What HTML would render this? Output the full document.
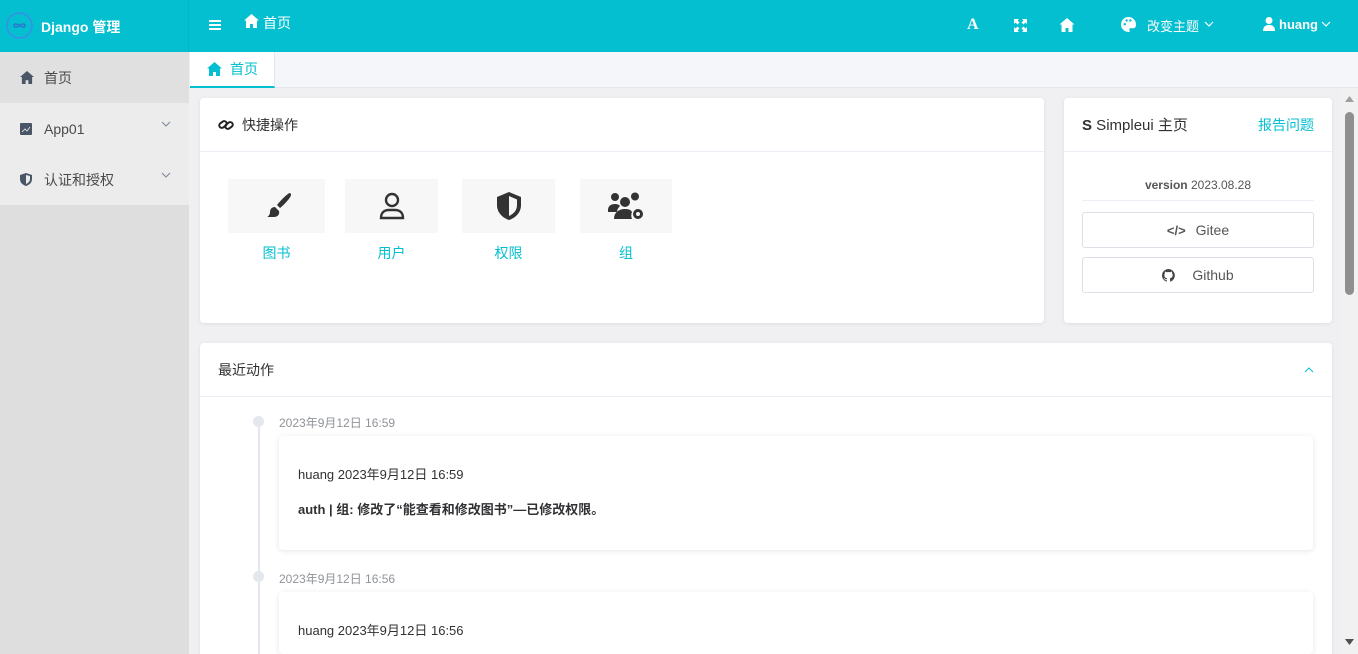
<!DOCTYPE html>
<html style="width:1358px;height:654px;overflow:hidden"><head><meta charset="utf-8"><style>
*{box-sizing:border-box;margin:0;padding:0}
html,body{overflow:hidden}
body{width:1358px;height:654px;overflow:hidden;font-family:"Liberation Sans","Noto Sans CJK SC",sans-serif;font-size:14px;color:#303133;background:#f0f0f3;position:relative}
.top{position:absolute;left:0;top:0;width:1358px;height:52px;background:#03bfcf;color:#fff}
.logo{position:absolute;left:0;top:0;width:189px;height:52px;border-right:1px solid #07b4c3}
.side{position:absolute;left:0;top:52px;width:189px;height:602px;background:#dedede}
.item{height:51px;display:flex;align-items:center;padding-left:20px;color:#4a4a4a;font-size:14px;background:#ececec;position:relative}
.item.act{background:#e0e0e0}
.item .ic{width:14px;margin-right:10px;display:flex}
.chev{position:absolute;right:18px;top:18px}
.tabs{position:absolute;left:190px;top:52px;width:1168px;height:36px;background:#f5f6f9;border-bottom:1px solid #e4e7ed}
.tab{position:absolute;left:0;top:0;width:85px;height:36px;background:#fff;border-right:1px solid #e4e7ed;border-bottom:2px solid #03bfcf;color:#03bfcf;display:flex;align-items:center;padding-left:17px;font-size:14px}
.card{position:absolute;background:#fff;border-radius:4px;box-shadow:0 1px 4px rgba(0,0,0,.08);overflow:hidden}
.hd{height:54px;border-bottom:1px solid #ebeef5;display:flex;align-items:center;padding-left:18px;font-size:14px}
.qa{position:absolute;text-align:center;color:#03bfcf;font-size:14px}
.qa .b{height:54px;background:#f7f7f7;display:flex;align-items:center;justify-content:center;margin-bottom:10px}
.btn{position:absolute;left:18px;width:232px;height:36px;border:1px solid #dcdfe6;border-radius:3px;display:flex;align-items:center;justify-content:center;color:#555;font-size:14px}
.ts{position:absolute;left:79px;color:#909399;font-size:12px}
.dot{position:absolute;left:53px;width:11px;height:11px;border-radius:50%;background:#e4e7ed}
.ent{position:absolute;left:79px;width:1034px;background:#fff;border-radius:4px;box-shadow:0 1px 6px rgba(0,0,0,.1);padding:28px 19px;font-size:13px;overflow:hidden}
</style></head><body>
<div class="top">
 <div class="logo">
  <svg style="position:absolute;left:6px;top:12px" width="27" height="27" viewBox="0 0 27 27"><circle cx="13.5" cy="13.5" r="12.5" fill="none" stroke="#3a8ee6" stroke-width="1.5"/><path d="M8 13.5c0-2 3-2 5.5 0s5.5 2 5.5 0-3-2-5.5 0-5.5 2-5.5 0z" fill="none" stroke="#2a7ad0" stroke-width="1.6"/></svg>
  <span style="position:absolute;left:41px;top:17px;font-weight:bold;font-size:14px">Django 管理</span>
 </div>
 <svg style="position:absolute;left:209px;top:19px" width="12" height="12" viewBox="0 0 12 12" fill="#fff"><rect y="1" width="12" height="2"/><rect y="5" width="12" height="2"/><rect y="9" width="12" height="2"/></svg>
 <svg style="position:absolute;left:244px;top:14px" width="15" height="14" viewBox="0 0 15 14" fill="#fff"><path d="M7.5 0L0 6.5h2V14h4V10h3v4h4V6.5h2z"/></svg>
 <span style="position:absolute;left:263px;top:13px;font-size:14px">首页</span>
 <span style="position:absolute;left:967px;top:16px;font-weight:bold;font-family:'Liberation Serif',serif;font-size:16px">A</span>
 <svg style="position:absolute;left:1014px;top:19px" width="13" height="13" viewBox="0 0 13 13" fill="#fff"><path d="M0 0h5L3.5 1.5 5.5 3.5 3.5 5.5 1.5 3.5 0 5zM13 0v5l-1.5-1.5-2 2-2-2 2-2L8 0zM0 13V8l1.5 1.5 2-2 2 2-2 2L5 13zM13 13H8l1.5-1.5-2-2 2-2 2 2L13 8z"/></svg>
 <svg style="position:absolute;left:1059px;top:18px" width="16" height="14" viewBox="0 0 15 14" fill="#fff"><path d="M7.5 0L0 6.5h2V14h4V10h3v4h4V6.5h2z"/></svg>
 <svg style="position:absolute;left:1121px;top:17px" width="15" height="15" viewBox="0 0 16 16" fill="#fff"><path d="M8 0a8 8 0 100 16c1.5 0 1.6-1.2 1-2-.6-1 0-2 1.3-2H13c2 0 3-1.5 3-4A8 8 0 008 0zM4 9a1.3 1.3 0 110-2.6A1.3 1.3 0 014 9zm2-4a1.3 1.3 0 110-2.6A1.3 1.3 0 016 5zm4 0a1.3 1.3 0 110-2.6A1.3 1.3 0 0110 5z"/></svg>
 <span style="position:absolute;left:1147px;top:16px;font-size:13px">改变主题</span>
 <svg style="position:absolute;left:1204px;top:21px" width="10" height="6" viewBox="0 0 10 6"><path d="M1 1l4 4 4-4" fill="none" stroke="#fff" stroke-width="1.2"/></svg>
 <svg style="position:absolute;left:1263px;top:17px" width="12" height="14" viewBox="0 0 12 14" fill="#fff"><circle cx="6" cy="3.5" r="3.5"/><path d="M0 14c0-4 2-6 6-6s6 2 6 6z"/></svg>
 <span style="position:absolute;left:1279px;top:17px;font-size:13px;font-weight:bold">huang</span>
 <svg style="position:absolute;left:1321px;top:21px" width="10" height="6" viewBox="0 0 10 6"><path d="M1 1l4 4 4-4" fill="none" stroke="#fff" stroke-width="1.2"/></svg>
</div>
<div class="side">
 <div class="item act"><span class="ic"><svg width="14" height="13" viewBox="0 0 15 14" fill="#4a5668"><path d="M7.5 0L0 6.5h2V14h4V10h3v4h4V6.5h2z"/></svg></span>首页</div>
 <div class="item"><span class="ic"><svg width="12" height="12" viewBox="0 0 12 12"><rect width="12" height="12" rx="1" fill="#4a5668"/><path d="M2 9l3-3 2 2 3-4" stroke="#ececec" fill="none" stroke-width=".8"/></svg></span>App01<svg class="chev" width="10" height="6" viewBox="0 0 10 6"><path d="M1 1l4 4 4-4" fill="none" stroke="#7a8499"/></svg></div>
 <div class="item"><span class="ic"><svg width="12" height="13" viewBox="0 0 12 13"><path d="M6 0L0 2v4c0 4 3 6 6 7 3-1 6-3 6-7V2z" fill="#4a5668"/><path d="M6 2v9c2-1 4-2.5 4-5V3z" fill="#ececec"/></svg></span>认证和授权<svg class="chev" width="10" height="6" viewBox="0 0 10 6"><path d="M1 1l4 4 4-4" fill="none" stroke="#7a8499"/></svg></div>
</div>
<div class="tabs"><div class="tab"><svg width="15" height="14" viewBox="0 0 15 14" fill="#03bfcf" style="margin-right:8px"><path d="M7.5 0L0 6.5h2V14h4V10h3v4h4V6.5h2z"/></svg>首页</div></div>

<div class="card" style="left:200px;top:98px;width:844px;height:225px">
 <div class="hd"><svg width="16" height="14" viewBox="0 0 16 14" style="margin-right:8px"><g fill="none" stroke="#222" stroke-width="2"><rect x="1" y="4" width="8" height="5" rx="2.5" transform="rotate(-35 5 6.5)"/><rect x="7" y="5" width="8" height="5" rx="2.5" transform="rotate(-35 11 7.5)"/></g></svg>快捷操作</div>
 <div class="qa" style="left:28px;top:81px;width:97px"><div class="b"><svg width="30" height="28" viewBox="0 0 30 28"><path d="M28 1c-2 0-9 7-13 12l3 3c5-4 11-11 11-13 0-1-.5-2-1-2z" fill="#333"/><path d="M13 15c-3 0-5 2-5 5 0 2-1 4-3 5h7c3 0 6-2 5-6z" fill="#333"/></svg></div>图书</div>
 <div class="qa" style="left:145px;top:81px;width:93px"><div class="b"><svg width="26" height="28" viewBox="0 0 26 28" fill="none" stroke="#333" stroke-width="2.4"><circle cx="13" cy="8" r="6"/><path d="M2 26c0-5 3-8 8-8h6c5 0 8 3 8 8z"/></svg></div>用户</div>
 <div class="qa" style="left:262px;top:81px;width:93px"><div class="b"><svg width="26" height="30" viewBox="0 0 26 30"><path d="M13 1L1 6v8c0 8 6 13 12 15 6-2 12-7 12-15V6z" fill="#333"/><path d="M13 5v20c4-2 8-5 8-11V8.5z" fill="#f7f7f7"/></svg></div>权限</div>
 <div class="qa" style="left:380px;top:81px;width:92px"><div class="b"><svg width="36" height="28" viewBox="0 0 36 28" fill="#333"><circle cx="7" cy="5" r="4"/><circle cx="27" cy="4.5" r="4"/><circle cx="17" cy="10" r="5"/><path d="M0 18c0-4 3-6 7-6s5 2 5 2c-2 2-3 4-3 6H0z"/><path d="M6 27c0-6 4-10 11-10 4 0 6 1 7 3-1 2-1 5 0 7z"/><circle cx="30" cy="22" r="5" fill="#333"/><circle cx="30" cy="22" r="2" fill="#f7f7f7"/></svg></div>组</div>
</div>

<div class="card" style="left:1064px;top:98px;width:268px;height:225px">
 <div class="hd" style="justify-content:space-between;padding-right:18px;height:54px"><span style="font-size:15px"><b>S</b> Simpleui 主页</span><span style="color:#03bfcf;font-size:14px">报告问题</span></div>
 <div style="position:absolute;left:18px;top:80px;width:232px;text-align:center;font-size:12px;color:#555;border-bottom:1px solid #ebeef5;padding-bottom:8px"><b>version</b> 2023.08.28</div>
 <div class="btn" style="top:114px"><span style="font-weight:bold;margin-right:10px;font-size:13px">&lt;/&gt;</span>Gitee</div>
 <div class="btn" style="top:159px"><svg width="13" height="13" viewBox="0 0 16 16" style="margin-right:17px"><path fill="#444" d="M8 0a8 8 0 00-2.5 15.6c.4 0 .5-.2.5-.4v-1.5c-2.2.5-2.7-1-2.7-1-.4-.9-.9-1.2-.9-1.2-.7-.5.1-.5.1-.5.8.1 1.2.8 1.2.8.7 1.3 1.9.9 2.300.7.1-.5.3-.9.5-1.1-1.8-.2-3.6-.9-3.6-4 0-.9.3-1.6.8-2.1-.1-.2-.4-1 .1-2.1 0 0 .7-.2 2.2.8a7.6 7.6 0 014 0c1.5-1 2.2-.8 2.2-.8.4 1.1.2 1.9.1 2.1.5.6.8 1.3.8 2.1 0 3.1-1.9 3.8-3.6 4 .3.3.5.8.5 1.5v2.2c0 .2.1.5.6.4A8 8 0 008 0z"/></svg>Github</div>
</div>

<div class="card" style="left:200px;top:343px;width:1132px;height:311px;border-radius:4px 4px 0 0">
 <div class="hd" style="justify-content:space-between;padding-right:18px">最近动作<svg width="10" height="6" viewBox="0 0 10 6"><path d="M1 5l4-4 4 4" fill="none" stroke="#03bfcf"/></svg></div>
 <div style="position:absolute;left:58px;top:78px;width:2px;height:233px;background:#e4e7ed"></div>
 <div class="dot" style="top:73px"></div><div class="ts" style="top:71px">2023年9月12日 16:59</div>
 <div class="ent" style="top:93px;height:114px">huang 2023年9月12日 16:59<div style="font-weight:bold;margin-top:16px">auth | 组: 修改了“能查看和修改图书”—已修改权限。</div></div>
 <div class="dot" style="top:228px"></div><div class="ts" style="top:227px">2023年9月12日 16:56</div>
 <div class="ent" style="top:249px;height:62px">huang 2023年9月12日 16:56</div>
</div>

<div style="position:absolute;left:1342px;top:88px;width:16px;height:566px;background:#f1f1f1"></div>
<div style="position:absolute;left:1345px;top:112px;width:9px;height:183px;background:#8f8f8f;border-radius:5px"></div>
<svg style="position:absolute;left:1345px;top:96px" width="9" height="6"><path d="M0 6L4.5 0 9 6z" fill="#a0a0a0"/></svg>
<svg style="position:absolute;left:1345px;top:639px" width="9" height="6"><path d="M0 0L4.5 6 9 0z" fill="#505050"/></svg>
</body></html>
